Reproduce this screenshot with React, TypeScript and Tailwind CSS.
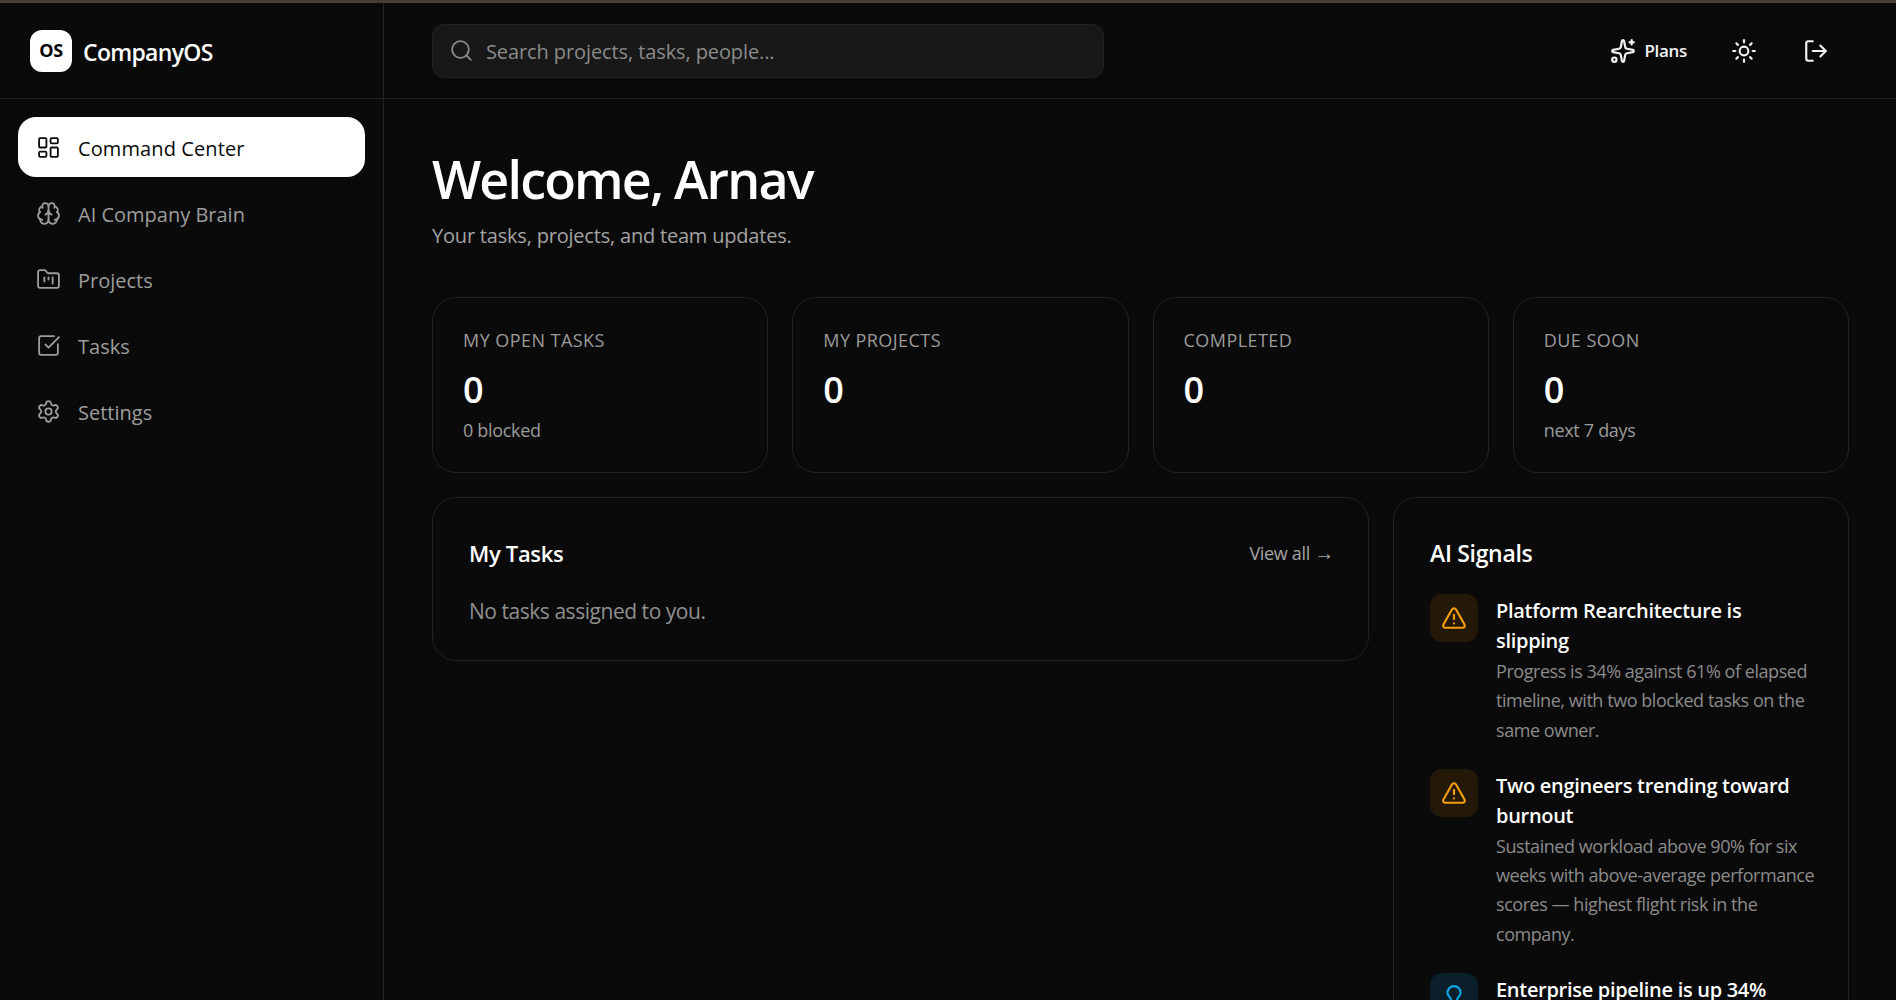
import { LayoutDashboard, Brain, FolderKanban, SquareCheckBig, Settings, Search, Sparkles, Sun, LogOut, TriangleAlert, Lightbulb } from 'lucide-react';

const navItems = [
  { label: 'Command Center', icon: LayoutDashboard, active: true },
  { label: 'AI Company Brain', icon: Brain },
  { label: 'Projects', icon: FolderKanban },
  { label: 'Tasks', icon: SquareCheckBig },
  { label: 'Settings', icon: Settings },
];

const stats = [
  { label: 'MY OPEN TASKS', value: '0', sub: '0 blocked' },
  { label: 'MY PROJECTS', value: '0' },
  { label: 'COMPLETED', value: '0' },
  { label: 'DUE SOON', value: '0', sub: 'next 7 days' },
];

const signals = [
  {
    title: 'Platform Rearchitecture is slipping',
    body: 'Progress is 34% against 61% of elapsed timeline, with two blocked tasks on the same owner.',
    kind: 'warn',
  },
  {
    title: 'Two engineers trending toward burnout',
    body: 'Sustained workload above 90% for six weeks with above-average performance scores — highest flight risk in the company.',
    kind: 'warn',
  },
  {
    title: 'Enterprise pipeline is up 34%',
    body: '',
    kind: 'info',
  },
];

export default function App() {
  return (
    <div className="h-screen overflow-hidden bg-[#0a0a0a] text-white font-['Open_Sans',sans-serif] tracking-[-0.02em]">
      <div className="h-[3px] bg-[#4a3a32]" />
      <div className="flex h-[997px]">
        <aside className="w-[384px] shrink-0 border-r border-[#232323]">
          <div className="h-[96px] flex items-center gap-[11px] pl-[30px] border-b border-[#232323]">
            <div className="w-[42px] h-[42px] rounded-xl bg-white text-black flex items-center justify-center text-[18px] font-bold">OS</div>
            <span className="pt-[3px] text-[23px] font-semibold tracking-[-0.03em]">CompanyOS</span>
          </div>
          <nav className="px-[18px] pt-[18px] flex flex-col gap-1.5">
            {navItems.map((item) => (
              <div
                key={item.label}
                className={
                  item.active
                    ? 'h-[60px] rounded-[18px] bg-white text-[#0a0a0a] flex items-center gap-[17px] pl-[18px] text-[20px] font-medium tracking-[0.005em]'
                    : 'h-[60px] rounded-[18px] text-[#9d9d9d] flex items-center gap-[17px] pl-[18px] text-[20px] tracking-normal'
                }
              >
                <item.icon size={25} strokeWidth={1.75} />
                <span className="pt-[3px]">{item.label}</span>
              </div>
            ))}
          </nav>
        </aside>

        <main className="flex-1 min-w-0">
          <header className="h-[96px] flex items-center justify-between pl-12 pr-[67px] border-b border-[#232323]">
            <div className="w-[672px] h-[54px] rounded-xl bg-[#181818] border border-[#222222] flex items-center gap-[12px] pl-[16px] text-[20px] tracking-[-0.005em] text-[#8a8a8a]">
              <Search size={25} strokeWidth={1.75} />
              <span className="pt-[2px]">Search projects, tasks, people...</span>
            </div>
            <div className="flex items-center text-[#f2f2f2]">
              <Sparkles size={26} strokeWidth={2} />
              <span className="ml-2 mr-[44px] text-[17px] font-semibold">Plans</span>
              <Sun size={26} strokeWidth={2} className="mr-[46px]" />
              <LogOut size={26} strokeWidth={2} />
            </div>
          </header>

          <div className="pl-12 pr-[47px] pt-[48px]">
            <h1 className="text-[52px] leading-[64px] font-semibold tracking-[-0.035em]">Welcome, Arnav</h1>
            <p className="mt-[10px] text-[20px] leading-[30px] tracking-[-0.01em] text-[#a3a3a3]">Your tasks, projects, and team updates.</p>

            <div className="mt-[46px] grid grid-cols-4 gap-6">
              {stats.map((s) => (
                <div key={s.label} className="h-[176px] rounded-3xl border border-[#222222] px-[30px] pt-[29px]">
                  <div className="text-[18px] leading-[26px] tracking-[0.025em] text-[#9a9a9a]">{s.label}</div>
                  <div className="mt-[14px] text-[36px] leading-[46px] font-semibold">{s.value}</div>
                  {s.sub && <div className="mt-[4px] text-[18px] leading-[26px] text-[#9a9a9a]">{s.sub}</div>}
                </div>
              ))}
            </div>

            <div className="mt-6 flex gap-6 items-start">
              <section className="flex-1 h-[164px] rounded-3xl border border-[#222222] pl-9 pr-[34px] pt-[36px]">
                <div className="flex items-center justify-between">
                  <h2 className="text-[22px] leading-[38px] font-semibold">My Tasks</h2>
                  <span className="text-[18px] leading-[26px] text-[#a3a3a3]">View all <span className="text-[20px] leading-none">→</span></span>
                </div>
                <p className="mt-[23px] text-[21px] leading-[32px] tracking-[-0.022em] text-[#8f8f8f]">No tasks assigned to you.</p>
              </section>

              <section className="w-[456px] shrink-0 rounded-3xl border border-[#222222] pl-9 pr-[30px] pt-[36px] pb-9">
                <h2 className="text-[23px] leading-[38px] font-semibold">AI Signals</h2>
                <div className="mt-[22px] flex flex-col gap-6">
                  {signals.map((sig) => (
                    <div key={sig.title} className="flex gap-[18px]">
                      <div
                        className={
                          sig.kind === 'warn'
                            ? 'w-12 h-12 shrink-0 rounded-xl bg-[#241808] text-[#f59e0b] flex items-center justify-center'
                            : 'w-12 h-12 shrink-0 rounded-xl bg-[#0a1f29] text-[#0ea5e9] flex items-center justify-center'
                        }
                      >
                        {sig.kind === 'warn' ? <TriangleAlert size={26} strokeWidth={2} /> : <Lightbulb size={26} strokeWidth={2} />}
                      </div>
                      <div className="min-w-0 pt-[2px]">
                        <div className="text-[20px] leading-[30px] font-semibold tracking-[-0.015em]">{sig.title}</div>
                        <p className="mt-[1px] text-[18px] leading-[29.3px] tracking-[-0.025em] text-[#8a8a8a]">{sig.body}</p>
                      </div>
                    </div>
                  ))}
                </div>
              </section>
            </div>
          </div>
        </main>
      </div>
    </div>
  );
}
